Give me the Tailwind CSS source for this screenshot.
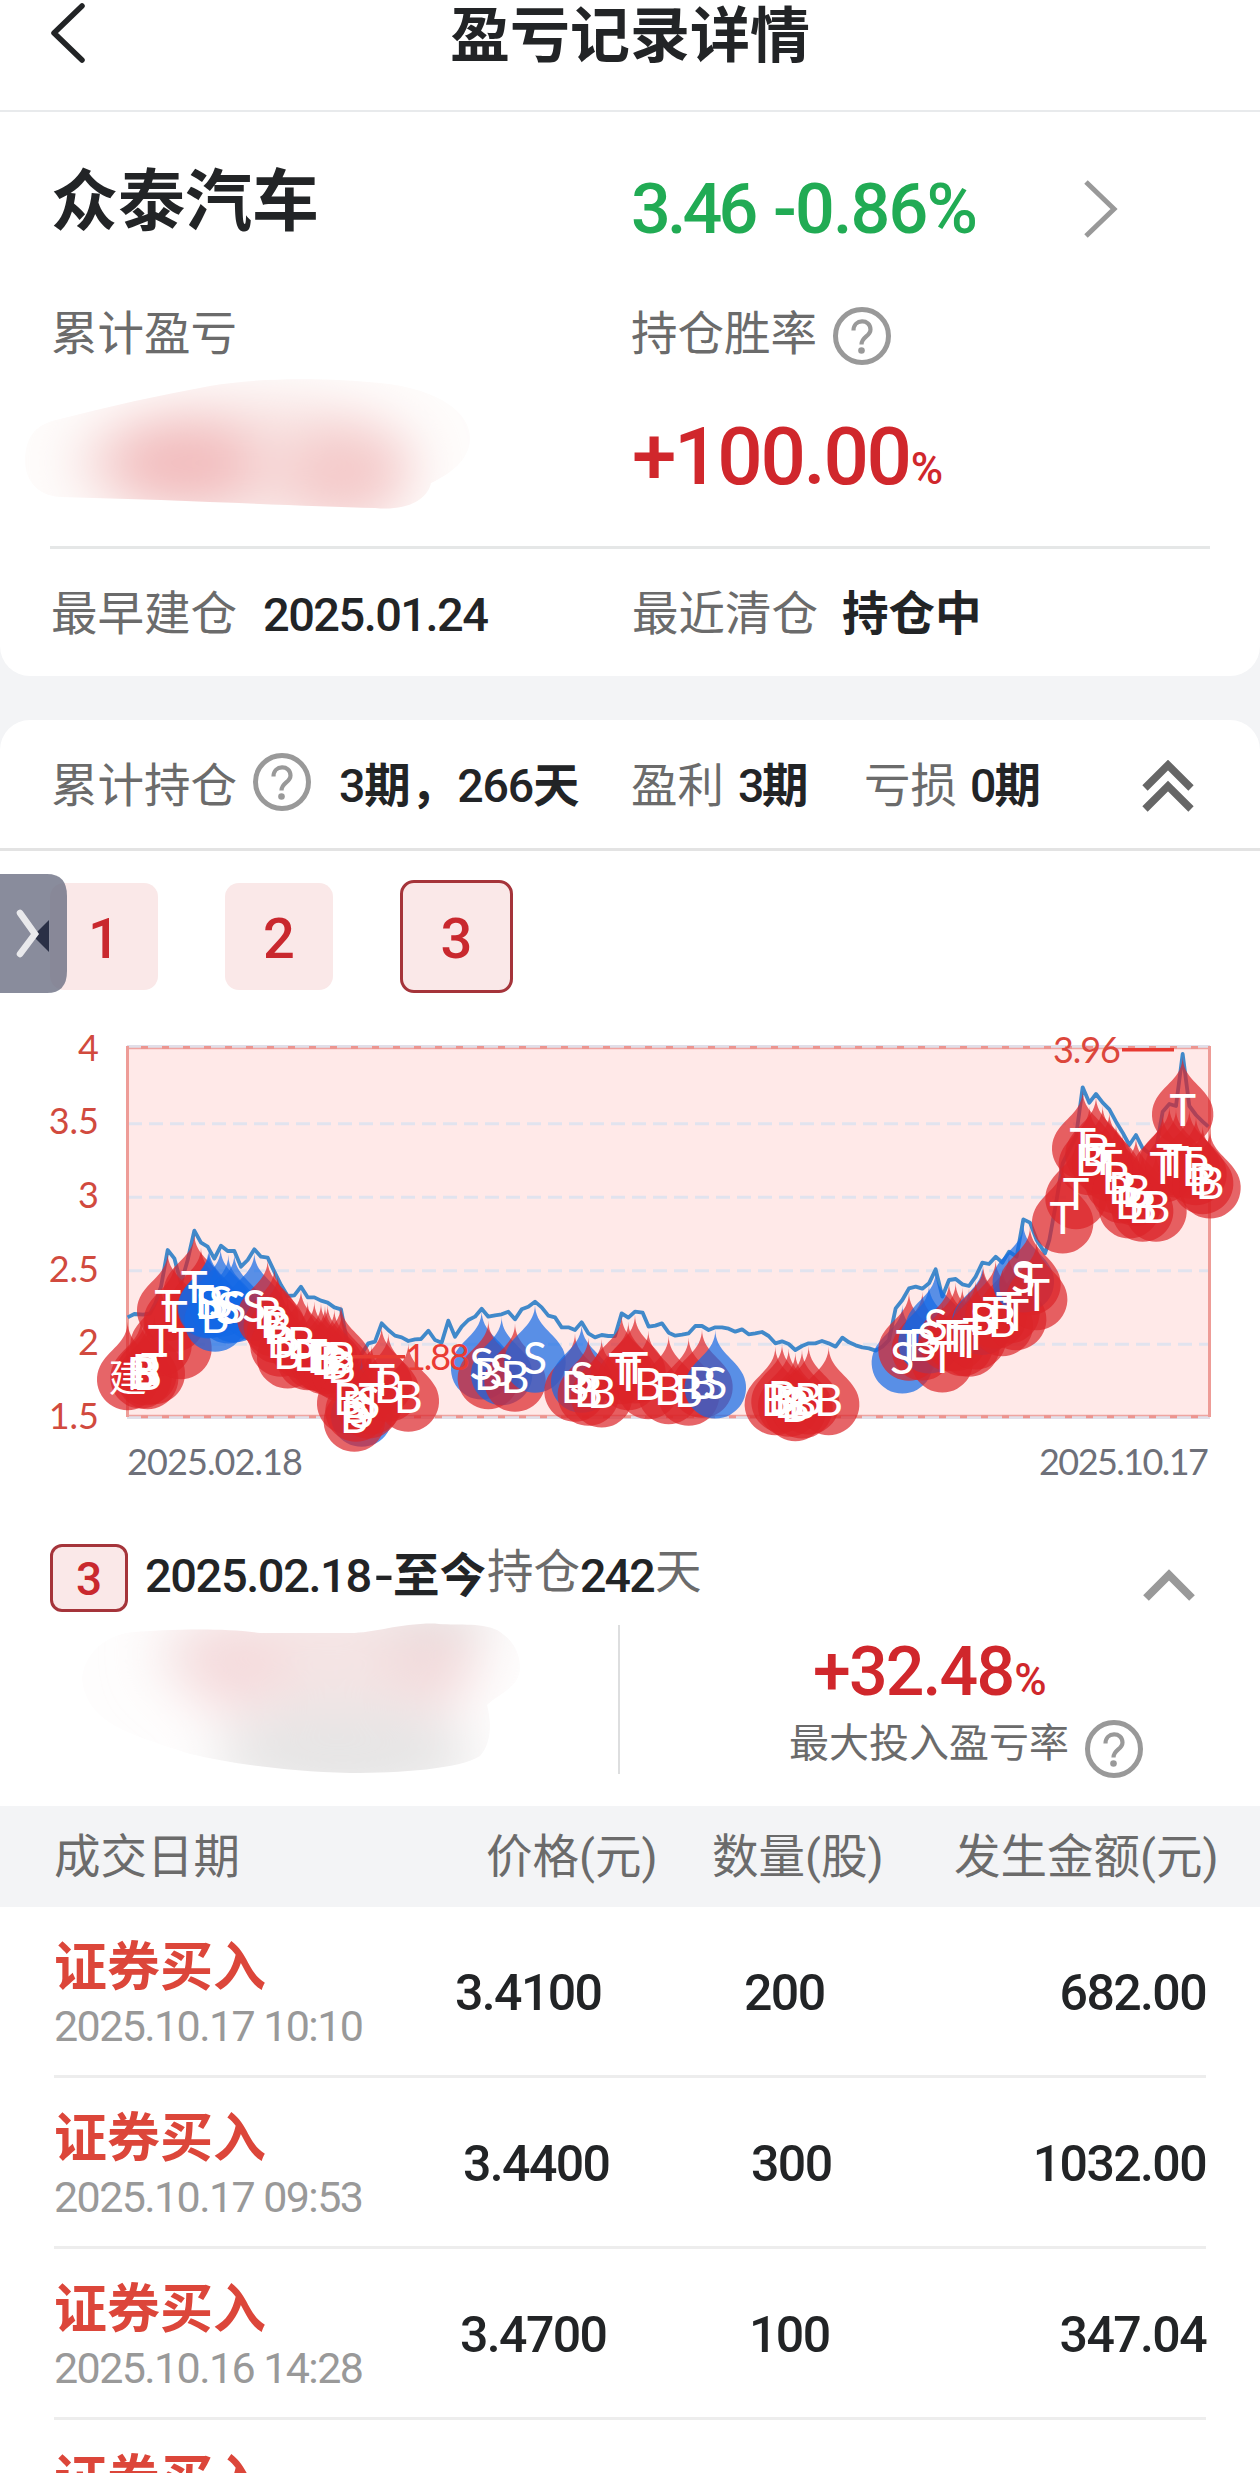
<!DOCTYPE html>
<html lang="zh-CN">
<head>
    <meta charset="UTF-8">
    <meta name="viewport" content="width=device-width, initial-scale=1.0">
    <title>盈亏记录详情</title>
    <script src="https://cdn.jsdelivr.net/npm/@tailwindcss/browser@4"></script>
    <style>
        body {
            font-family: Roboto, 'Noto Sans CJK SC', sans-serif;
            overflow: hidden;
        }
        #chart text { font-family: Lato, 'Noto Sans CJK SC', sans-serif; }
    </style>
</head>
<body class="bg-[#f3f4f6] text-[#222426] w-[1260px] h-[2473px] leading-none whitespace-nowrap">

    <!-- Shared question mark icon -->
    <svg class="hidden">
        <symbol id="help" viewBox="0 0 60 60">
            <circle cx="30" cy="30" r="26.500" fill="none" stroke="#999" stroke-width="5"/>
            <path d="M21.500 24.500C21.500 12.500 38.500 12.500 38.500 23.500C38.500 30.500 29.500 30.500 29.500 38.500" fill="none" stroke="#999" stroke-width="4.200"/>
            <circle cx="29.500" cy="44.500" r="3.300" fill="#999"/>
        </symbol>
    </svg>

    <!-- Header -->
    <header class="bg-white h-[112px] border-b-2 border-[#e8eaec] grid grid-cols-[200px_1fr_200px] items-center pb-[36px]">
        <svg class="w-[40px] h-[66px] ml-[49px] -mt-2" viewBox="0 0 40 66" fill="none" stroke="#222426" stroke-width="5.500" stroke-linecap="round" stroke-linejoin="round"><path d="M33 6L5 33L33 60"/></svg>
        <h1 class="text-[60px] font-bold text-center">盈亏记录详情</h1>
    </header>

    <!-- Summary card -->
    <section class="bg-white h-[564px] rounded-b-[30px] pt-[42px]">
        <div class="grid grid-cols-[581px_1fr] pl-[51px] items-center h-[108px]">
            <h2 class="text-[67px] font-bold -mt-3">众泰汽车</h2>
            <div class="flex items-center text-[70px] font-medium text-[#21ab54] pt-px">
                <span class="w-[142px] -ml-px tracking-[-0.055em]">3.46</span>
                <span class="w-[307px] tracking-[-0.026em]">-0.86%</span>
                <svg class="w-[44px] h-[62px]" viewBox="0 0 44 62" fill="none" stroke="#999" stroke-width="5"><path d="M6 4L34 31L6 58"/></svg>
            </div>
        </div>
        <div class="grid grid-cols-[580px_1fr] pl-[51px] items-center h-[70px] mt-[39px] text-[46.500px] text-[#6b6b6b]">
            <span class="-mt-[3px]">累计盈亏</span>
            <div class="flex items-center gap-[15px]"><span class="-mt-[3px]">持仓胜率</span><svg class="w-[60px] h-[60px]"><use href="#help"/></svg></div>
        </div>
        <div class="grid grid-cols-[601px_1fr] pl-[31px] h-[175px]">
            <svg class="w-[460px] h-[140px] -ml-[11px]" viewBox="20 368 460 140">
                <defs>
                    <clipPath id="smudge1"><path d="M25 457C26 430 38 421 60 416C110 403 160 392 210 383C260 374 330 375 380 380C440 386 470 410 470 435C470 458 448 472 431 480C427 498 405 508 375 505C300 503 180 497 60 494C35 492 25 475 25 457Z"/></clipPath>
                    <filter id="soft" x="-50%" y="-80%" width="200%" height="260%"><feGaussianBlur stdDeviation="26"/></filter>
                </defs>
                <g clip-path="url(#smudge1)">
                    <rect x="20" y="370" width="460" height="140" fill="#fefcfb"/>
                    <g filter="url(#soft)">
                        <ellipse cx="245" cy="460" rx="175" ry="65" fill="#f8e2e1"/>
                        <ellipse cx="185" cy="460" rx="75" ry="42" fill="#f2bcbd"/>
                        <ellipse cx="345" cy="472" rx="62" ry="50" fill="#f4caca"/>
                    </g>
                </g>
            </svg>
            <div class="text-[#d0272c] font-medium pt-[46px]"><span class="text-[80px] tracking-[-0.029em]">+100.00</span><span class="text-[44px] ml-px">%</span></div>
        </div>
        <div class="mx-[50px] h-[3px] bg-[#e5e7e7]"></div>
        <div class="grid grid-cols-[581px_1fr] pl-[51px] items-center h-[130px] text-[46.500px]">
            <div class="flex items-center"><span class="w-[212px] text-[#6b6b6b]">最早建仓</span><span class="text-[47px] font-medium tracking-[-0.033em]">2025.01.24</span></div>
            <div class="flex items-center"><span class="w-[210px] text-[#6b6b6b]">最近清仓</span><span class="font-bold">持仓中</span></div>
        </div>
    </section>

    <!-- Holding periods -->
    <section class="bg-white mt-[44px] rounded-t-[30px]">
        <div class="flex items-center h-[131px] pl-[51px] pt-1 border-b-3 border-[#e3e3e3] text-[46.500px] font-bold">
            <span class="w-[201px] font-normal text-[#6b6b6b]">累计持仓</span>
            <svg class="w-[60px] h-[60px] -mt-2"><use href="#help"/></svg>
            <span class="w-[292px] pl-[27px]"><span class="font-medium tracking-[-0.025em]">3</span>期，<span class="font-medium tracking-[-0.025em]">266</span>天</span>
            <span class="w-[106px] pl-[27px] font-normal text-[#6b6b6b]">盈利</span>
            <span class="w-[126px] pl-[28px]"><span class="font-medium tracking-[-0.05em]">3</span>期</span>
            <span class="w-[134px] pl-[28px] font-normal text-[#6b6b6b]">亏损</span>
            <span class="w-[172px]"><span class="font-medium tracking-[-0.04em]">0</span>期</span>
            <svg class="w-[52px] h-[52px]" viewBox="0 0 52 52" fill="none" stroke="#666" stroke-width="7.500"><path d="M3 28L26 5L49 28M3 49L26 26L49 49"/></svg>
        </div>

        <div class="relative flex items-center h-[171px] pl-[50px] text-[56px] font-medium text-[#c9282e] text-center">
            <div class="w-[108px] h-[107px] leading-[113px] rounded-[14px] bg-[#fae8e8]">1</div>
            <div class="w-[108px] h-[107px] leading-[113px] rounded-[14px] bg-[#fae8e8] ml-[67px]">2</div>
            <div class="w-[113px] h-[113px] leading-[112px] rounded-[14px] bg-[#fae8e8] border-3 border-[#a5343a] ml-[67px]">3</div>
            <!-- side drawer handle -->
            <svg class="absolute left-0 top-[23px] w-[67px] h-[119px]" viewBox="0 0 67 119">
                <path d="M0 0H47Q67 0 67 22V97Q67 119 47 119H0Z" fill="#717588" fill-opacity=".83"/>
                <path d="M49 46V78L33 62Z" fill="#2a3046"/>
                <path d="M20 39L35 60L20 80" fill="none" stroke="#e9e9ec" stroke-width="6.500" stroke-linecap="round"/>
            </svg>
        </div>

        <svg id="chart" class="block w-[1260px] h-[478px]" viewBox="0 1022 1260 478">
            <rect x="127" y="1047" width="1083" height="369" fill="#ffe9e8"/>
            <g id="grid" stroke="#e1e3ee" stroke-width="3" stroke-dasharray="14 7">
                <path d="M128 1123.700H1209M128 1197.200H1209M128 1270.700H1209M128 1344.200H1209"/>
            </g>
            <path d="M127 1046.500H1210M127 1417.500H1210" stroke="#e1dfe9" stroke-width="3"/>
            <path d="M127 1048.500H1210M127 1415.500H1210" stroke="#efa5a1" stroke-width="1.500"/>
            <path d="M141 1047.500H1208M141 1416.800H1208" stroke="#ec9590" stroke-width="3" stroke-dasharray="7 14"/>
            <path d="M127.500 1046V1417M1209.500 1046V1417" stroke="#ee9c97" stroke-width="3"/>
            <polyline id="price" fill="none" stroke="#4189ca" stroke-width="3.800" stroke-linejoin="round"/>
            <g id="pins" fill-opacity=".7"></g>
            <path d="M353 1356.700H405M1122 1049.700H1174" stroke="#e83a32" stroke-width="3.500"/>
            <g font-size="36" fill="#dc463b">
                <text x="405" y="1369.500" textLength="65" fill="#ea3b33">1.88</text>
                <text x="1053" y="1062.500" textLength="68">3.96</text>
                <g text-anchor="end" fill="#d14a3e">
                    <text x="99" y="1061">4</text>
                    <text x="99" y="1134">3.5</text>
                    <text x="99" y="1208">3</text>
                    <text x="99" y="1282">2.5</text>
                    <text x="99" y="1355">2</text>
                    <text x="99" y="1429">1.5</text>
                </g>
                <text x="127" y="1475" textLength="176" fill="#6e7079">2025.02.18</text>
                <text x="1039" y="1475" textLength="170" fill="#6e7079">2025.10.17</text>
            </g>
            <g id="pinLabels" font-size="45" fill="#fff" text-anchor="middle"></g>
        </svg>

        <!-- Current period -->
        <div class="flex h-[122px] pl-[50px] pt-[44px]">
            <div class="w-[78px] h-[68px] rounded-[12px] border-3 border-[#a5343a] bg-[#fae8e8] text-[#c9282e] text-[46px] font-medium leading-[65px] text-center">3</div>
            <div class="flex w-[1015px] pl-[17px] text-[46.500px] font-bold leading-[64px]">
                <span class="w-[248px] text-[47px] tracking-[-0.03em] font-medium">2025.02.18<span class="inline-block origin-left scale-x-125 ml-[3px]">-</span></span>
                <span class="w-[94px]">至今</span>
                <span class="w-[93px] font-normal text-[#6b6b6b] -mt-[4px]">持仓</span>
                <span class="w-[75px] tracking-[-0.04em] font-medium">242</span>
                <span class="font-normal text-[#6b6b6b] -mt-[4px]">天</span>
            </div>
            <svg class="w-[52px] h-[34px] mt-[25px]" viewBox="0 0 52 34" fill="none" stroke="#999" stroke-width="8"><path d="M3 29L26 6L49 29"/></svg>
        </div>
        <div class="flex h-[184px]">
            <div class="w-[620px] h-[149px] mt-[3px] border-r-2 border-[#dddedf] pl-[75px]">
                <svg class="w-[460px] h-[152px] -mt-[3px]" viewBox="75 1623 460 152">
                    <defs>
                        <clipPath id="smudge2"><path d="M82 1680C84 1655 105 1635 135 1633C160 1631 220 1628 260 1634H350C375 1634 400 1624 435 1624.500C455 1627 480 1623 497 1631C515 1642 520 1655 520 1670C518 1690 498 1695 487 1706C492 1725 491 1745 480 1757C460 1770 400 1774 350 1774C280 1772 230 1764 190 1755C130 1735 87 1725 82 1680Z"/></clipPath>
                    </defs>
                    <g clip-path="url(#smudge2)">
                        <rect x="75" y="1623" width="460" height="152" fill="#fefdfd"/>
                        <g filter="url(#soft)">
                            <ellipse cx="345" cy="1755" rx="130" ry="48" fill="#e6e5e5"/>
                            <ellipse cx="320" cy="1655" rx="165" ry="55" fill="#f4e4e4"/>
                            <ellipse cx="235" cy="1672" rx="50" ry="42" fill="#f5dadc"/>
                            <ellipse cx="430" cy="1670" rx="42" ry="42" fill="#f3dadb"/>
                            <ellipse cx="440" cy="1618" rx="60" ry="14" fill="#dfdada"/>
                        </g>
                    </g>
                </svg>
            </div>
            <div class="flex flex-col pl-[169px]">
                <div class="pl-[24px] pt-[16px] text-[#d0272c] font-medium"><span class="text-[68px] tracking-[-0.027em]">+32.48</span><span class="text-[44px] ml-px">%</span></div>
                <div class="flex gap-[15px] text-[40px] text-[#6b6b6b] mt-[12px]"><span class="pt-[6px]">最大投入盈亏率</span><svg class="w-[60px] h-[60px] mt-px"><use href="#help"/></svg></div>
            </div>
        </div>

        <!-- Trades -->
        <div class="flex items-center h-[101px] bg-[#f3f4f6] pl-[54px] pt-[2px] text-[46.500px] text-[#6b6b6b]">
            <span class="w-[432px]">成交日期</span>
            <span class="w-[226px]">价格(元)</span>
            <span class="w-[242px]">数量(股)</span>
            <span>发生金额(元)</span>
        </div>
        <div id="trades"></div>
    </section>

    <template id="tradeRow">
        <div class="flex items-center mx-[54px] h-[171px] pt-[3px] border-b-3 border-[#ededed] text-[50px] font-medium tracking-[-0.032em]">
            <div class="w-[401px] pt-[5px]">
                <div class="text-[53px] font-bold text-[#dc463a] tracking-normal">证券买入</div>
                <div class="text-[43px] font-normal text-[#999] tracking-[-0.037em] mt-[10px]"></div>
            </div>
            <div></div>
            <div></div>
            <div class="flex-1 text-right"></div>
        </div>
    </template>

    <script>
    // date, price, quantity, amount, price indent, quantity offset from price
    const trades = [
        ['2025.10.17 10:10', '3.4100', '200', '682.00', 0, 289],
        ['2025.10.17 09:53', '3.4400', '300', '1032.00', 8, 288],
        ['2025.10.16 14:28', '3.4700', '100', '347.04', 5, 289],
        ['2025.10.16 10:02', '3.4500', '100', '345.04', 5, 289]
    ];
    const tradeList = document.getElementById('trades');
    trades.forEach(([date, price, qty, amount, indent, step]) => {
        const row = document.getElementById('tradeRow').content.cloneNode(true).firstElementChild;
        row.children[0].children[1].textContent = date;
        row.children[1].textContent = price;
        row.children[1].style.marginLeft = indent + 'px';
        row.children[1].style.width = step + 'px';
        row.children[2].textContent = qty;
        row.children[3].textContent = amount;
        tradeList.appendChild(row);
    });

    // Closing price line, three segments of [x, y] in thirds of a pixel
    const line = [
        [0, [383,892, 403,882, 430,884, 450,880, 466,850, 483,800, 503,690, 523,715, 543,790, 563,720, 583,632, 603,668, 623,680, 643,716, 663,677, 683,693, 703,693, 723,740, 743,720, 763,688, 783,710, 803,713, 823,755, 843,795, 863,828, 883,826, 903,800, 923,832, 943,832, 963,842, 983,848, 1003,862, 1023,868, 1040,960, 1063,1030, 1083,1005, 1105,970, 1125,965, 1145,910, 1165,930, 1185,947, 1205,952, 1225,963, 1245,958]],
        [420, [3,957, 25,932, 45,960, 65,968, 85,902, 105,950, 125,920, 145,900, 165,890, 185,866, 205,890, 225,886, 245,883, 265,875, 285,898, 305,868, 325,860, 345,845, 365,862, 385,887, 405,892, 425,922, 445,922, 465,930, 485,907, 505,940, 525,952, 545,945, 565,948, 585,948, 605,880, 625,893, 645,875, 668,878, 686,920, 706,917, 726,910, 746,938, 766,947, 786,944, 806,940, 826,918, 846,918, 866,930, 886,922, 906,922, 926,926, 946,935, 966,928, 986,943, 1006,940, 1026,936, 1046,948, 1066,970, 1086,964, 1106,972, 1126,990, 1146,978, 1166,970, 1186,970, 1206,963, 1226,970]],
        [830, [17,980, 37,953, 57,967, 77,976, 97,982, 117,985, 137,992, 157,980, 177,960, 197,865, 217,840, 237,805, 257,800, 277,806, 297,790, 317,748, 337,830, 357,780, 377,777, 397,793, 417,798, 437,770, 457,728, 477,732, 497,710, 517,728, 537,695, 560,710, 580,598, 600,608, 620,660, 645,700, 658,660, 678,550, 698,430, 738,350, 758,202, 778,248, 798,222, 818,248, 838,268, 858,305, 878,338, 898,375, 918,345, 938,385, 958,400, 978,390, 998,275, 1018,252, 1038,258, 1058,102, 1078,258, 1098,285, 1118,305, 1135,320]]
    ];
    // Trade marks: letter (lowercase = blue pin), x, y of the letter centre
    const marks = [
        [0, '建 383 1065, B 423 1060, B 443 1062, B 438 1050, T 463 1047, T 483 962, T 503 858, T 523 890, T 543 972, T 583 802, T 603 842, b 628 848, s 625 850, b 645 890, s 662 845, s 685 865, s 703 862, s 763 857, B 803 880, B 823 905, B 833 925, B 843 965, B 863 1000, B 903 970, B 923 1005, T 943 1005, B 963 1010, B 975 1018, B 983 1015, B 1003 1028, B 1023 1015, B 1025 1040, B 1043 1137, s 1085 1175, B 1068 1160, B 1063 1190, B 1105 1150:S, B 1115 1137:T, T 1145 1080, B 1165 1100, B 1225 1130'],
        [420, 's 185 1033, B 205 1062, s 245 1050, B 285 1070, s 345 1013, B 465 1100, s 485 1073, B 505 1112, B 545 1117, T 605 1047, T 625 1065, T 645 1045, B 685 1092, B 746 1107, B 806 1112, B 846 1088, s 886 1090, B 1066 1140, B 1086 1132, B 1106 1145, B 1126 1158, B 1146 1150, B 1166 1138, B 1226 1140'],
        [830, 's 217 1015, T 237 977, B 277 976, s 297 955, s 317 915, T 337 1012, T 357 948, T 377 948, T 397 963, T 417 965, s 457 898, B 460 898, T 437 943, T 497 880, B 517 903, T 537 865, T 557 885, s 580 772, T 600 780, T 620 825, T 698 595, T 738 522, T 758 372, B 778 420, B 798 390, T 818 418, T 838 438, B 858 475, B 878 505, B 898 550, B 918 513, B 938 560, B 978 560, T 998 443, T 1018 420, T 1038 427, T 1058 270, T 1078 430, B 1098 450, B 1118 477, B 1140 490']
    ];
    const toXY = (dx, x, y) => [dx + x / 3, 1020 + y / 3];

    document.getElementById('price').setAttribute('points', line.map(([dx, pts]) => {
        const out = [];
        for (let i = 0; i < pts.length; i += 2) out.push(toXY(dx, pts[i], pts[i + 1]).join());
        return out.join(' ');
    }).join(' '));

    // Drop shape: tip at 0,0 and a round body of radius 30.7 below it
    const drop = 'M0 0C0 21.300 -19.700 28.200 -27.700 44.700A30.700 30.700 0 1 0 27.700 44.700C19.700 28.200 0 21.300 0 0Z';
    let pins = '', labels = '';
    marks.forEach(([dx, list]) => list.split(', ').forEach(item => {
        const [kind, mx, my] = item.split(' ');
        const [x, y] = toXY(dx, +mx, parseFloat(my));
        const letter = (item.split(':')[1] || kind).toUpperCase();
        const blue = kind === 's' || kind === 'b';
        pins += `<path d="${drop}" transform="translate(${x} ${y - 53.5})" fill="${blue ? '#1268e6' : '#dc2428'}"/>`;
        labels += `<text x="${x}" y="${y + 16}"${letter === '建' ? ' font-size="38"' : ''}>${letter}</text>`;
    }));
    document.getElementById('pins').innerHTML = pins;
    document.getElementById('pinLabels').innerHTML = labels;
    </script>
</body>
</html>
